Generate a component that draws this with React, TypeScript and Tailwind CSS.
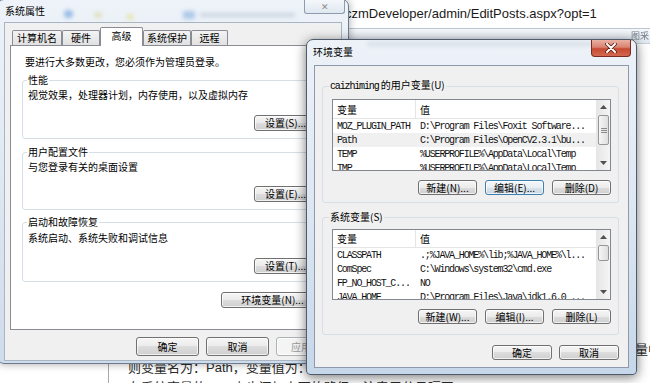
import React from "react";

const cjk = "font-['Noto_Sans_CJK_SC',sans-serif]";
const mono = "font-['Liberation_Mono','Noto_Sans_CJK_SC',monospace] text-[10px] tracking-[-1.15px]";

type BtnProps = { children: React.ReactNode; className?: string; kind?: "normal" | "focus" | "disabled" };

function Btn({ children, className = "", kind = "normal" }: BtnProps) {
  const look =
    kind === "focus"
      ? "border-[#3c7fb1] bg-[linear-gradient(#f4f8fb_0%,#e8eef3_50%,#d8e2ea_50%,#cbd7e1_100%)] text-black"
      : kind === "disabled"
        ? "border-[#adb2b5] bg-[#f4f4f4] text-[#9a9a9a]"
        : "border-[#707070] bg-[linear-gradient(#f6f6f6_0%,#ebebeb_50%,#dddddd_50%,#cfcfcf_100%)] text-black";
  return (
    <div
      className={`flex shrink-0 items-center justify-center rounded-[3px] border text-[10px] leading-none shadow-[inset_0_0_0_1px_rgba(255,255,255,0.7)] ${look} ${className}`}
    >
      {children}
    </div>
  );
}

function Group({
  label,
  className = "",
  legend = "",
  children,
}: {
  label: React.ReactNode;
  className?: string;
  legend?: string;
  children: React.ReactNode;
}) {
  return (
    <fieldset className={`rounded-[3px] border border-[#d5dfe5] ${className}`}>
      <legend className={`px-[1px] text-[10px] leading-[12px] ${legend}`}>{label}</legend>
      {children}
    </fieldset>
  );
}

function Arrow({ up }: { up?: boolean }) {
  return (
    <div className="flex h-[14px] shrink-0 items-center justify-center">
      <svg width="7" height="4" viewBox="0 0 7 4">
        <path d={up ? "M0 4 L3.5 0 L7 4Z" : "M0 0 L3.5 4 L7 0Z"} fill="#505050" />
      </svg>
    </div>
  );
}

function ScrollBar({ thumb, grip }: { thumb: string; grip?: boolean }) {
  return (
    <div className="flex w-[14px] shrink-0 flex-col border-l border-[#e6e6e6] bg-[linear-gradient(90deg,#e6e6e6,#f5f5f5)]">
      <Arrow up />
      <div
        className={`mx-[1px] mt-[1px] flex flex-col items-center justify-center gap-[1px] rounded-[2px] border border-[#979797] bg-[linear-gradient(90deg,#f6f6f6,#dedede)] ${thumb}`}
      >
        {grip && (
          <>
            <span className="h-px w-[6px] bg-[#8a8a8a]" />
            <span className="h-px w-[6px] bg-[#8a8a8a]" />
            <span className="h-px w-[6px] bg-[#8a8a8a]" />
          </>
        )}
      </div>
      <div className="flex-1" />
      <Arrow />
    </div>
  );
}

type Row = { k: string; v: string; sel?: boolean };

function ListView({
  rows,
  className,
  head,
  thumb,
  grip,
}: {
  rows: Row[];
  className: string;
  head: string;
  thumb: string;
  grip?: boolean;
}) {
  return (
    <div className={`flex overflow-hidden border border-[#828790] bg-white ${className}`}>
      <div className="min-w-0 flex-1">
        <div className={`flex border-b border-[#e5e5e5] text-[10px] ${head}`}>
          <span className="flex w-[83px] items-center border-r border-[#e5e5e5] pl-[4px]">变量</span>
          <span className="flex items-center pl-[4px]">值</span>
        </div>
        {rows.map((r) => (
          <div
            key={r.k}
            className={`flex h-[14px] items-center whitespace-nowrap text-[#111] ${mono} ${r.sel ? "bg-[#f0f0f0]" : ""}`}
          >
            <span className="w-[83px] shrink-0 pl-[4px]">{r.k}</span>
            <span className="pl-[4px]">{r.v}</span>
          </div>
        ))}
      </div>
      <ScrollBar thumb={thumb} grip={grip} />
    </div>
  );
}

const userRows: Row[] = [
  { k: "MOZ_PLUGIN_PATH", v: "D:\\Program Files\\Foxit Software..." },
  { k: "Path", v: "C:\\Program Files\\OpenCV2.3.1\\bu...", sel: true },
  { k: "TEMP", v: "%USERPROFILE%\\AppData\\Local\\Temp" },
  { k: "TMP", v: "%USERPROFILE%\\AppData\\Local\\Temp" },
];

const sysRows: Row[] = [
  { k: "CLASSPATH", v: ".;%JAVA_HOME%\\lib;%JAVA_HOME%\\l..." },
  { k: "ComSpec", v: "C:\\Windows\\system32\\cmd.exe" },
  { k: "FP_NO_HOST_C...", v: "NO" },
  { k: "JAVA_HOME", v: "D:\\Program Files\\Java\\jdk1.6.0_..." },
];

function Tab({ w, active, children }: { w: string; active?: boolean; children: React.ReactNode }) {
  return active ? (
    <div
      className={`relative z-10 -mb-px flex h-[19px] items-start justify-center rounded-t-[2px] border border-b-0 border-[#898c95] bg-white pt-[2px] text-[10px] leading-[12px] ${w}`}
    >
      {children}
    </div>
  ) : (
    <div
      className={`flex h-[15px] items-center justify-center rounded-t-[2px] border border-b-0 border-[#898c95] bg-[linear-gradient(#f3f3f3,#e1e1e1)] text-[10px] leading-[12px] ${w}`}
    >
      {children}
    </div>
  );
}

function SystemProps() {
  return (
    <div className="absolute left-[-3px] top-[-1px] flex h-[365px] w-[352px] flex-col rounded-[7px] border border-[#6b7b8f] bg-[linear-gradient(180deg,#eef3f9_0%,#dbe5f1_60%,#cfdcec_100%)] shadow-[0_0_8px_rgba(0,0,0,0.35)]">
      {/* title bar */}
      <div className="relative flex h-[22px] shrink-0 items-start justify-between">
        <span className="absolute left-[66px] top-[10px] h-[8px] w-[9px] rounded-full bg-[#5b95d8] opacity-60 blur-[2px]" />
        <span className="absolute left-[96px] top-[12px] h-[6px] w-[8px] rounded-full bg-[#d8d49a] opacity-60 blur-[2px]" />
        <span className="absolute left-[128px] top-[14px] h-[6px] w-[8px] rounded-full bg-[#e4dd8e] opacity-60 blur-[2px]" />
        <span className="absolute left-[185px] top-[11px] h-[8px] w-[12px] bg-[#6fa0d8] opacity-50 blur-[2px]" />
        <span className="absolute left-[202px] top-[13px] h-[4px] w-[95px] bg-[#9aa8b8] opacity-40 blur-[2px]" />
        <span className="relative pl-[7px] pt-[5px] text-[10px] leading-[12px] text-black">系统属性</span>
        <div className="relative mr-[3px] flex h-[14px] w-[41px] items-center justify-center rounded-b-[3px] border border-t-0 border-[#8d9bad] bg-[linear-gradient(#f4f7fb,#dfe7f0)] text-[9px] text-[#8a8a8a]">
          ✕
        </div>
      </div>

      {/* client */}
      <div className="mx-[6px] mb-[2px] flex flex-1 flex-col border border-[#a9b5c3] bg-[#f0f0f0] px-[5px] pt-[4px]">
        <div className="ml-[2px] flex h-[18px] shrink-0 items-end">
          <Tab w="w-[50px]">计算机名</Tab>
          <Tab w="w-[38px]">硬件</Tab>
          <Tab w="w-[43px]" active>
            高级
          </Tab>
          <Tab w="w-[48px]">系统保护</Tab>
          <Tab w="w-[37px]">远程</Tab>
        </div>

        <div className="flex h-[285px] shrink-0 flex-col border border-[#898c95] bg-white px-[11px] pt-[10px]">
          <p className="ml-[3px] text-[10px] leading-[12px]">要进行大多数更改，您必须作为管理员登录。</p>

          <Group label="性能" className="mt-[6px] pb-[7px] pl-[5px] pr-[6px]" legend="-ml-[1px]">
            <p className="mt-[3px] text-[10px] leading-[12px]">视觉效果，处理器计划，内存使用，以及虚拟内存</p>
            <div className="mt-[14px] flex justify-end">
              <Btn className="h-[16px] w-[63px]">设置(S)...</Btn>
            </div>
          </Group>

          <Group label="用户配置文件" className="mt-[7px] pb-[7px] pl-[5px] pr-[6px]" legend="-ml-[1px]">
            <p className="mt-[3px] text-[10px] leading-[12px]">与您登录有关的桌面设置</p>
            <div className="mt-[13px] flex justify-end">
              <Btn className="h-[16px] w-[63px]">设置(E)...</Btn>
            </div>
          </Group>

          <Group label="启动和故障恢复" className="mt-[6px] pb-[7px] pl-[5px] pr-[6px]" legend="-ml-[1px]">
            <p className="mt-[4px] text-[10px] leading-[12px]">系统启动、系统失败和调试信息</p>
            <div className="mt-[14px] flex justify-end">
              <Btn className="h-[16px] w-[63px]">设置(T)...</Btn>
            </div>
          </Group>

          <div className="mt-[10px] flex justify-end">
            <Btn className="h-[16px] w-[103px]">环境变量(N)...</Btn>
          </div>
        </div>

        <div className="-mr-[3px] mt-[7px] flex justify-end gap-[7px]">
          <Btn className="h-[19px] w-[63px]">确定</Btn>
          <Btn className="h-[19px] w-[63px]">取消</Btn>
          <Btn className="h-[19px] w-[63px]" kind="disabled">
            应用(A)
          </Btn>
        </div>
      </div>
    </div>
  );
}

function EnvVars() {
  return (
    <div className="absolute left-[306px] top-[39px] flex h-[336px] w-[331px] flex-col rounded-b-[4px] rounded-t-[7px] border border-[#4f5b6a] bg-[linear-gradient(180deg,#edf2f8_0%,#dde7f2_50%,#c6d7ea_100%)] shadow-[0_2px_12px_rgba(0,0,0,0.55)]">
      {/* title bar */}
      <div className="relative flex h-[25px] shrink-0 items-start justify-between">
        <span className="absolute left-[60px] top-[2px] h-[4px] w-[230px] bg-[#aab4c0] opacity-30 blur-[2px]" />
        <span className="relative pl-[6px] pt-[6px] text-[10px] leading-[12px] text-black">环境变量</span>
        <div className="relative mr-[5px] flex h-[17px] w-[40px] items-center justify-center rounded-b-[4px] border border-t-0 border-[#7a2a22] bg-[linear-gradient(#eab2a4_0%,#d98370_45%,#c64a32_55%,#d2694f_100%)]">
          <svg width="12" height="10" viewBox="0 0 12 10">
            <path d="M2 1 L10 9 M10 1 L2 9" stroke="#5a1a12" strokeWidth="3.6" strokeLinecap="round" />
            <path d="M2 1 L10 9 M10 1 L2 9" stroke="#ffffff" strokeWidth="2" strokeLinecap="round" />
          </svg>
        </div>
      </div>

      {/* client */}
      <div className="mx-[7px] mb-[6px] flex flex-1 flex-col border border-[#8e9aab] bg-[#f0f0f0] pl-[7px] pr-[9px] pt-[13px]">
        <Group
          label={
            <>
              <span className={mono}>caizhiming</span> 的用户变量(U)
            </>
          }
          className="pb-[7px] pl-[9px] pr-[7px]"
          legend="-ml-[3px]"
        >
          <ListView rows={userRows} className="mt-[6px] h-[72px]" head="h-[19px]" thumb="h-[30px]" grip />
          <div className="mt-[9px] flex justify-end gap-[8px]">
            <Btn className="h-[15px] w-[59px]">新建(N)...</Btn>
            <Btn className="h-[15px] w-[59px]" kind="focus">
              编辑(E)...
            </Btn>
            <Btn className="h-[15px] w-[59px]">删除(D)</Btn>
          </div>
        </Group>

        <Group label="系统变量(S)" className="mt-[8px] pb-[10px] pl-[9px] pr-[7px]" legend="-ml-[3px]">
          <ListView rows={sysRows} className="mt-[6px] h-[71px]" head="h-[18px]" thumb="h-[16px]" />
          <div className="mt-[9px] flex justify-end gap-[8px]">
            <Btn className="h-[15px] w-[59px]">新建(W)...</Btn>
            <Btn className="h-[15px] w-[59px]">编辑(I)...</Btn>
            <Btn className="h-[15px] w-[59px]">删除(L)</Btn>
          </div>
        </Group>

        <div className="mt-[10px] flex justify-end gap-[7px]">
          <Btn className="h-[15px] w-[60px]">确定</Btn>
          <Btn className="h-[15px] w-[60px]">取消</Btn>
        </div>
      </div>
    </div>
  );
}

export default function App() {
  return (
    <div className={`relative h-[383px] w-[650px] overflow-hidden bg-white text-black ${cjk}`}>
      {/* browser behind the dialogs */}
      <div className="flex h-full flex-col">
        <div className="flex h-[29px] shrink-0 items-center border-b border-[#bcc7d4] bg-white pl-[345px] font-['Liberation_Sans',sans-serif] text-[13px] text-[#1a1a1a]">
          czmDeveloper/admin/EditPosts.aspx?opt=1
        </div>
        <div className="flex h-[15px] shrink-0 items-center justify-end gap-[4px] border-b border-[#c8d2de] bg-[linear-gradient(#f5f8fb,#e2e9f2)] pr-[1px] text-[9px] text-[#3a4656]">
          <span className="opacity-70 blur-[0.5px]">图采</span>
        </div>
        <div className="flex min-h-0 flex-1">
          <div className="w-[109px] shrink-0 border-r border-[#a8a8a8] bg-white" />
          <div className="flex min-w-0 flex-1 flex-col overflow-hidden whitespace-nowrap bg-white pl-[19px] pt-[297px] font-['Liberation_Sans','Noto_Sans_CJK_SC',sans-serif] text-[13px] leading-[18px] text-[#2a2a2a]">
            <p>在系统变量中新建一个变量，用于保存库的安装路径，然后再把它也添加到系统的环境变量中，</p>
            <p>则变量名为：Path，变量值为：C:\Program Files\OpenCV2.3.1\build\x86\vc10\bin</p>
            <p className="mt-[2px]">在系统变量的Path中也添加上面的路径，注意用分号隔开</p>
          </div>
        </div>
      </div>

      <SystemProps />
      <EnvVars />
    </div>
  );
}
